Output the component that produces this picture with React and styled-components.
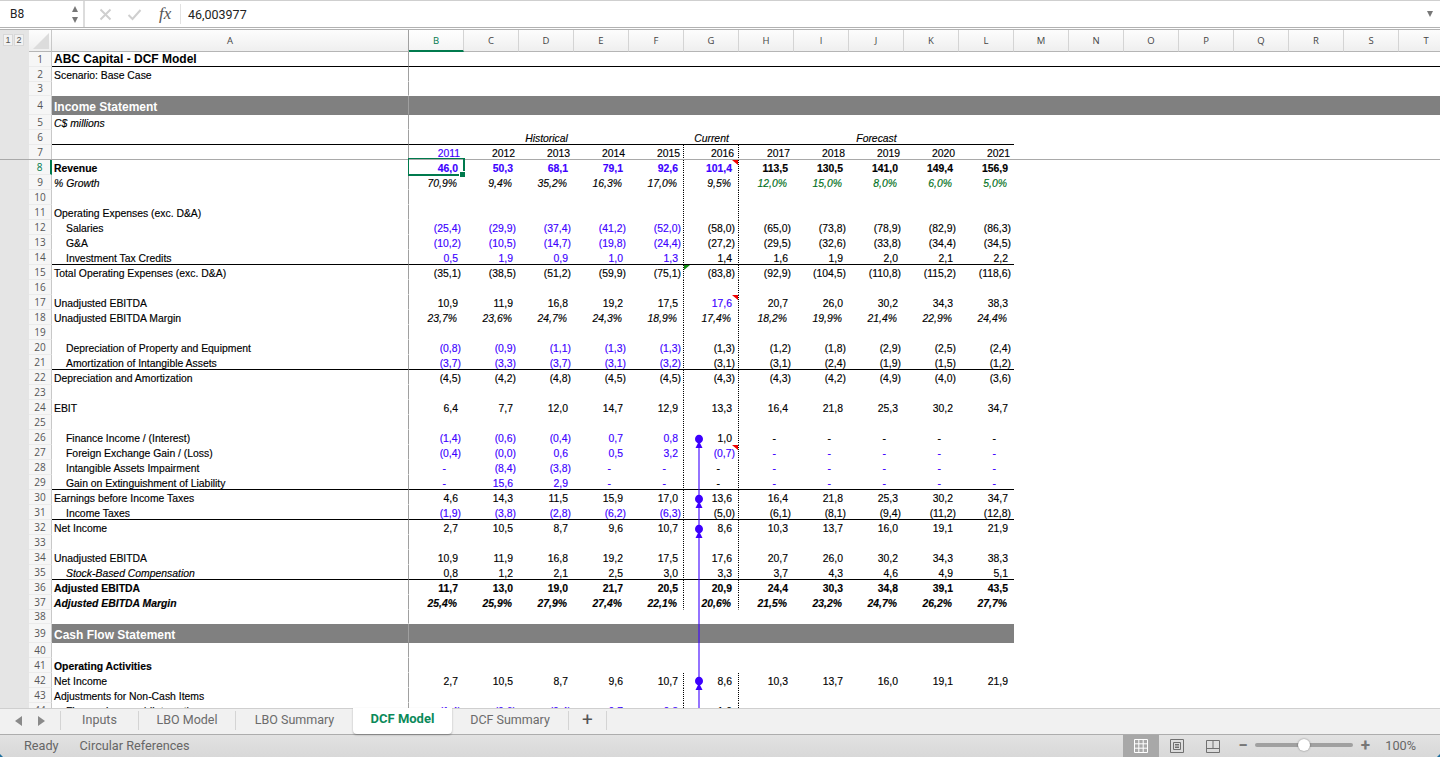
import React from 'react';
import styled, { createGlobalStyle } from 'styled-components';

const GlobalStyle = createGlobalStyle`
  html, body, #root { margin: 0; height: 100%; }
  body { overflow: hidden; background: #fff; font-family: "Liberation Sans", Arial, sans-serif; }
`;

const BLUE = '#3d00ff';
const GREEN = '#007a4d';
const COLS = 'BCDEFGHIJKLMNOPQRST'.split('');

const Page = styled.div`
  width: 1440px;
  height: 757px;
  display: flex;
  flex-direction: column;
  overflow: hidden;
  position: relative;
`;

/* formula bar */
const FormulaBar = styled.div`
  height: 30px;
  box-sizing: border-box;
  flex: none;
  display: flex;
  background: #fff;
  border-top: 1px solid #cfcfcf;
  border-bottom: 3px double #b2b2b2;
  color: #222;
  font-family: Roboto, "Liberation Sans", sans-serif;
`;
const NameBox = styled.div`
  width: 85px;
  box-sizing: border-box;
  display: flex;
  align-items: center;
  justify-content: space-between;
  padding: 0 5px 0 10px;
  font-size: 12px;
  border-right: 2px solid #dcdcdc;
`;
const Spinner = styled.div`
  display: flex;
  flex-direction: column;
  gap: 5px;
`;
const Tri = styled.span`
  width: 0;
  height: 0;
  border-left: 3.5px solid transparent;
  border-right: 3.5px solid transparent;
  ${p => (p.$up ? 'border-bottom' : 'border-top')}: 6px solid #777;
`;
const BarIcons = styled.div`
  width: 96px;
  display: flex;
  align-items: center;
  gap: 15px;
  padding-left: 14px;
  box-sizing: border-box;
  border-right: 1px solid #e2e2e2;
  margin: 3px 0;
`;
const Fx = styled.span`
  font-family: "Liberation Serif", serif;
  font-style: italic;
  font-size: 17px;
  color: #555;
  margin-left: 2px;
`;
const FormulaText = styled.div`
  flex: 1;
  display: flex;
  align-items: center;
  padding-left: 7px;
  font-size: 12.5px;
`;
const DropArrow = styled.div`
  display: flex;
  align-items: center;
  padding-right: 7px;
`;

/* sheet */
const Sheet = styled.div`
  flex: 1;
  min-height: 0;
  position: relative;
  overflow: hidden;
`;
const Row = styled.div`
  display: flex;
  height: ${p => p.$h}px;
  position: relative;
  font-size: 10.4px;
  line-height: 11px;
  color: #000;
  ${p => p.$frozen && `
    &::after {
      content: '';
      position: absolute;
      left: 0;
      right: 0;
      bottom: 0;
      height: 1px;
      background: #a9a9a9;
    }
  `}
`;
const Gutter = styled.div`
  width: 29px;
  flex: none;
  box-sizing: border-box;
  background: #e5e5e5;
  display: flex;
  gap: 1px;
  padding: 4px 0 0 3px;
`;
const LevelBtn = styled.span`
  width: 10px;
  height: 12px;
  background: #f2f2f2;
  border: 1px solid #d8d8d8;
  box-sizing: border-box;
  font-size: 9px;
  line-height: 10px;
  text-align: center;
  color: #555;
`;
const RowNum = styled.div`
  width: 23px;
  flex: none;
  box-sizing: border-box;
  background: #f6f6f6;
  border-right: ${p => (p.$active ? `2px solid ${GREEN}` : '1px solid #c8c8c8')};
  border-bottom: 1px solid #ebebeb;
  color: ${p => (p.$active ? GREEN : '#555')};
  font-family: "Open Sans", "Liberation Sans", sans-serif;
  font-size: 10px;
  display: flex;
  align-items: center;
  justify-content: center;
`;
const HeaderCorner = styled.div`
  width: 23px;
  flex: none;
  box-sizing: border-box;
  background: linear-gradient(#fdfdfd, #efefef);
  border-right: 1px solid #c8c8c8;
  border-bottom: 1px solid #b5b5b5;
  display: flex;
  align-items: flex-end;
  justify-content: flex-end;
  padding: 0 2px 2px 0;
`;
const ColHead = styled.div`
  width: ${p => p.$w}px;
  flex: none;
  box-sizing: border-box;
  background: ${p => (p.$active ? 'linear-gradient(#fff, #f4f4f4)' : 'linear-gradient(#fdfdfd, #efefef)')};
  border-right: 1px solid ${p => (p.$frozen ? '#a0a0a0' : '#d4d4d4')};
  border-bottom: ${p => (p.$active ? `2px solid ${GREEN}` : '1px solid #b5b5b5')};
  color: ${p => (p.$active ? GREEN : '#444')};
  font-family: "Open Sans", "Liberation Sans", sans-serif;
  font-size: 9.5px;
  display: flex;
  align-items: center;
  justify-content: center;
`;
const Label = styled.div`
  width: 357px;
  flex: none;
  box-sizing: border-box;
  padding-left: ${p => (p.$indent ? 14 : 2)}px;
  padding-top: ${p => (p.$band ? 4 : p.$big ? 0 : 3)}px;
  border-right: 1px solid #a0a0a0;
  border-bottom: 1px solid ${p => (p.$line ? '#000' : 'transparent')};
  background: ${p => (p.$band ? '#808080' : 'transparent')};
  color: ${p => (p.$band ? '#fff' : '#000')};
  font-size: ${p => (p.$big ? 12 : 10.4)}px;
  line-height: ${p => (p.$big ? 14 : 11)}px;
  font-weight: ${p => (p.$bold ? 700 : 400)};
  font-style: ${p => (p.$italic ? 'italic' : 'normal')};
  white-space: nowrap;
  display: flex;
  align-items: center;
  -webkit-text-stroke: ${p => (p.$big ? 0 : 0.15)}px;
`;
const Cell = styled.div`
  width: ${p => (p.$dotted ? 56 : 55)}px;
  margin-left: ${p => (p.$dotted ? -1 : 0)}px;
  flex: none;
  box-sizing: border-box;
  position: relative;
  padding-right: ${p => p.$pad}px;
  padding-top: 3px;
  border-bottom: 1px solid ${p => (p.$line ? '#000' : 'transparent')};
  background: ${p => (p.$band ? '#808080' : 'transparent')};
  color: ${p => p.$color};
  font-weight: ${p => (p.$bold ? 700 : 400)};
  font-style: ${p => (p.$italic ? 'italic' : 'normal')};
  display: flex;
  align-items: center;
  justify-content: ${p => (p.$center ? 'center' : 'flex-end')};
  -webkit-text-stroke: 0.15px;
  ${p => p.$dotted && `
    border-left: 1px dotted #000;
    border-right: 1px dotted #000;
  `}
`;
const Rest = styled.div`
  flex: 1;
  box-sizing: border-box;
  border-bottom: 1px solid ${p => (p.$line ? '#000' : 'transparent')};
  background: ${p => (p.$band ? '#808080' : 'transparent')};
`;
const Marker = styled.span`
  position: absolute;
  top: 0;
  ${p => (p.$left ? 'left: 0' : 'right: 0')};
  width: 0;
  height: 0;
  border-top: 5px solid ${p => (p.$left ? '#118a11' : '#f00000')};
  ${p => (p.$left ? 'border-right' : 'border-left')}: 6px solid transparent;
`;
const Selection = styled.div`
  position: absolute;
  left: 408px;
  top: 128px;
  width: 57px;
  height: 18px;
  box-sizing: border-box;
  border: 1px solid ${GREEN};
  border-right-width: 2px;
  border-bottom-width: 2px;
  pointer-events: none;
`;
const Handle = styled.span`
  position: absolute;
  right: -3px;
  bottom: -4px;
  width: 5px;
  height: 5px;
  background: ${GREEN};
  border: 1px solid #fff;
  box-sizing: content-box;
`;
const TraceLayer = styled.svg`
  position: absolute;
  left: 690px;
  top: 0;
  width: 20px;
  height: 678px;
  pointer-events: none;
`;

/* tabs */
const TabBar = styled.div`
  height: 27px;
  flex: none;
  box-sizing: border-box;
  display: flex;
  background: #f1f1f1;
  border-top: 1px solid #cfcfcf;
  border-bottom: 1px solid #adadad;
  font-family: Roboto, "Liberation Sans", sans-serif;
  font-size: 12.5px;
  color: #6b6b6b;
  position: relative;
`;
const TabNav = styled.div`
  width: 61px;
  box-sizing: border-box;
  border-right: 1px solid #d4d4d4;
  margin: 2px 0 4px;
  display: flex;
  align-items: center;
  gap: 16px;
  padding-left: 15px;
`;
const NavArrow = styled.span`
  width: 0;
  height: 0;
  border-top: 5.5px solid transparent;
  border-bottom: 5.5px solid transparent;
  ${p => (p.$left ? 'border-right' : 'border-left')}: 7px solid #8a8a8a;
`;
const Tab = styled.div`
  width: ${p => p.$w}px;
  flex: none;
  box-sizing: border-box;
  display: flex;
  align-items: center;
  justify-content: center;
  padding-bottom: ${p => (p.$active ? 5 : 2)}px;
  margin-bottom: ${p => (p.$active ? 0 : 4)}px;
  margin-top: ${p => (p.$active ? -1 : 2)}px;
  border-right: ${p => (p.$active || p.$flush ? 'none' : '1px solid #d4d4d4')};
  background: ${p => (p.$active ? '#fff' : 'transparent')};
  color: ${p => (p.$active ? '#0b8a5a' : '#6b6b6b')};
  font-size: ${p => (p.$active ? 13 : 12.5)}px;
  font-weight: ${p => (p.$active ? 700 : 400)};
  border-radius: ${p => (p.$active ? '0 0 4px 4px' : 0)};
  box-shadow: ${p => (p.$active ? '0 1px 2px rgba(0,0,0,.3)' : 'none')};
`;
const PlusTab = styled(Tab)`
  font-size: 19px;
  font-weight: 400;
  color: #555;
`;

/* status bar */
const StatusBar = styled.div`
  height: 22px;
  flex: none;
  box-sizing: border-box;
  padding-bottom: 2px;
  display: flex;
  align-items: center;
  background: linear-gradient(#e2e2e2, #d8d8d8);
  font-family: Roboto, "Liberation Sans", sans-serif;
  font-size: 12.7px;
  color: #666;
`;
const StatusText = styled.span`
  margin-left: ${p => p.$ml}px;
`;
const Spacer = styled.div`
  flex: 1;
`;
const ViewBtn = styled.div`
  width: 36px;
  align-self: stretch;
  margin-bottom: -2px;
  display: flex;
  align-items: center;
  justify-content: center;
  background: ${p => (p.$active ? '#a8a8a8' : 'transparent')};
`;
const Zoomer = styled.div`
  display: flex;
  align-items: center;
  margin-left: 6px;
`;
const ZoomSign = styled.span`
  width: 12px;
  text-align: center;
  font-size: 17px;
  font-weight: 700;
  line-height: 18px;
  color: #777;
`;
const Track = styled.div`
  width: 98px;
  height: 4px;
  margin: 0 6px;
  border-radius: 2px;
  background: #a0a0a0;
  position: relative;
`;
const Thumb = styled.span`
  position: absolute;
  left: 43px;
  top: -4px;
  width: 12px;
  height: 12px;
  border-radius: 50%;
  background: #fff;
  box-shadow: 0 0 2px rgba(0,0,0,.45);
`;
const ZoomValue = styled.span`
  margin-left: 14px;
  margin-right: 24px;
  color: #666;
`;
const WindowCorner = styled.span`
  position: absolute;
  bottom: 0;
  ${p => (p.$right ? 'right: 0' : 'left: 0')};
  width: 0;
  height: 0;
  border-bottom: 3px solid #1f6f9e;
  ${p => (p.$right ? 'border-left' : 'border-right')}: 3px solid transparent;
`;

const n = (...v) => v;
const B = 'b', K = 'k', G = 'g';
const rep = (t, c) => t.repeat(c);
const hist = rep(B, 5) + rep(K, 6);

const DASHES = ['-', '-', '-', '-', '-'];

const rows = [
  { n: 1, label: 'ABC Capital - DCF Model', bold: true, big: true, line: 'all' },
  { n: 2, label: 'Scenario: Base Case' },
  { n: 3, h: 14 },
  { n: 4, label: 'Income Statement', bold: true, big: true, band: 'all', h: 19 },
  { n: 5, label: 'C$ millions', labelItalic: true },
  { n: 6, line: 'table', heads: { D: 'Historical', G: 'Current', J: 'Forecast' } },
  { n: 7, frozen: true, dotted: true, year: true, tone: 'b' + rep(K, 10), vals: n('2011', '2012', '2013', '2014', '2015', '2016', '2017', '2018', '2019', '2020', '2021') },
  { n: 8, label: 'Revenue', bold: true, labelBold: true, tone: rep(B, 6) + rep(K, 5), vals: n('46,0', '50,3', '68,1', '79,1', '92,6', '101,4', '113,5', '130,5', '141,0', '149,4', '156,9'), mark: 'red' },
  { n: 9, label: '% Growth', labelItalic: true, italic: true, tone: rep(K, 6) + rep(G, 5), vals: n('70,9%', '9,4%', '35,2%', '16,3%', '17,0%', '9,5%', '12,0%', '15,0%', '8,0%', '6,0%', '5,0%') },
  { n: 10 },
  { n: 11, label: 'Operating Expenses (exc. D&A)' },
  { n: 12, label: 'Salaries', indent: true, tone: hist, vals: n('(25,4)', '(29,9)', '(37,4)', '(41,2)', '(52,0)', '(58,0)', '(65,0)', '(73,8)', '(78,9)', '(82,9)', '(86,3)') },
  { n: 13, label: 'G&A', indent: true, tone: hist, vals: n('(10,2)', '(10,5)', '(14,7)', '(19,8)', '(24,4)', '(27,2)', '(29,5)', '(32,6)', '(33,8)', '(34,4)', '(34,5)') },
  { n: 14, label: 'Investment Tax Credits', indent: true, line: 'table', tone: hist, vals: n('0,5', '1,9', '0,9', '1,0', '1,3', '1,4', '1,6', '1,9', '2,0', '2,1', '2,2') },
  { n: 15, label: 'Total Operating Expenses (exc. D&A)', vals: n('(35,1)', '(38,5)', '(51,2)', '(59,9)', '(75,1)', '(83,8)', '(92,9)', '(104,5)', '(110,8)', '(115,2)', '(118,6)'), mark: 'green' },
  { n: 16 },
  { n: 17, label: 'Unadjusted EBITDA', tone: rep(K, 5) + B + rep(K, 5), vals: n('10,9', '11,9', '16,8', '19,2', '17,5', '17,6', '20,7', '26,0', '30,2', '34,3', '38,3'), mark: 'red' },
  { n: 18, label: 'Unadjusted EBITDA Margin', italic: true, vals: n('23,7%', '23,6%', '24,7%', '24,3%', '18,9%', '17,4%', '18,2%', '19,9%', '21,4%', '22,9%', '24,4%') },
  { n: 19 },
  { n: 20, label: 'Depreciation of Property and Equipment', indent: true, tone: hist, vals: n('(0,8)', '(0,9)', '(1,1)', '(1,3)', '(1,3)', '(1,3)', '(1,2)', '(1,8)', '(2,9)', '(2,5)', '(2,4)') },
  { n: 21, label: 'Amortization of Intangible Assets', indent: true, line: 'table', tone: hist, vals: n('(3,7)', '(3,3)', '(3,7)', '(3,1)', '(3,2)', '(3,1)', '(3,1)', '(2,4)', '(1,9)', '(1,5)', '(1,2)') },
  { n: 22, label: 'Depreciation and Amortization', vals: n('(4,5)', '(4,2)', '(4,8)', '(4,5)', '(4,5)', '(4,3)', '(4,3)', '(4,2)', '(4,9)', '(4,0)', '(3,6)') },
  { n: 23 },
  { n: 24, label: 'EBIT', vals: n('6,4', '7,7', '12,0', '14,7', '12,9', '13,3', '16,4', '21,8', '25,3', '30,2', '34,7') },
  { n: 25 },
  { n: 26, label: 'Finance Income / (Interest)', indent: true, tone: hist, vals: n('(1,4)', '(0,6)', '(0,4)', '0,7', '0,8', '1,0', ...DASHES) },
  { n: 27, label: 'Foreign Exchange Gain / (Loss)', indent: true, tone: rep(B, 11), vals: n('(0,4)', '(0,0)', '0,6', '0,5', '3,2', '(0,7)', ...DASHES), mark: 'red' },
  { n: 28, label: 'Intangible Assets Impairment', indent: true, tone: rep(B, 5) + K + rep(B, 5), vals: n('-', '(8,4)', '(3,8)', '-', '-', '-', ...DASHES) },
  { n: 29, label: 'Gain on Extinguishment of Liability', indent: true, line: 'table', tone: rep(B, 5) + K + rep(B, 5), vals: n('-', '15,6', '2,9', '-', '-', '-', ...DASHES) },
  { n: 30, label: 'Earnings before Income Taxes', vals: n('4,6', '14,3', '11,5', '15,9', '17,0', '13,6', '16,4', '21,8', '25,3', '30,2', '34,7') },
  { n: 31, label: 'Income Taxes', indent: true, line: 'table', tone: hist, vals: n('(1,9)', '(3,8)', '(2,8)', '(6,2)', '(6,3)', '(5,0)', '(6,1)', '(8,1)', '(9,4)', '(11,2)', '(12,8)') },
  { n: 32, label: 'Net Income', vals: n('2,7', '10,5', '8,7', '9,6', '10,7', '8,6', '10,3', '13,7', '16,0', '19,1', '21,9') },
  { n: 33 },
  { n: 34, label: 'Unadjusted EBITDA', vals: n('10,9', '11,9', '16,8', '19,2', '17,5', '17,6', '20,7', '26,0', '30,2', '34,3', '38,3') },
  { n: 35, label: 'Stock-Based Compensation', indent: true, labelItalic: true, line: 'table', vals: n('0,8', '1,2', '2,1', '2,5', '3,0', '3,3', '3,7', '4,3', '4,6', '4,9', '5,1') },
  { n: 36, label: 'Adjusted EBITDA', bold: true, labelBold: true, vals: n('11,7', '13,0', '19,0', '21,7', '20,5', '20,9', '24,4', '30,3', '34,8', '39,1', '43,5') },
  { n: 37, label: 'Adjusted EBITDA Margin', bold: true, labelBold: true, italic: true, labelItalic: true, vals: n('25,4%', '25,9%', '27,9%', '27,4%', '22,1%', '20,6%', '21,5%', '23,2%', '24,7%', '26,2%', '27,7%') },
  { n: 38, h: 14, noDots: true },
  { n: 39, label: 'Cash Flow Statement', bold: true, big: true, band: 'table', h: 19, noDots: true },
  { n: 40, noDots: true },
  { n: 41, label: 'Operating Activities', bold: true, labelBold: true, noDots: true },
  { n: 42, label: 'Net Income', vals: n('2,7', '10,5', '8,7', '9,6', '10,7', '8,6', '10,3', '13,7', '16,0', '19,1', '21,9') },
  { n: 43, label: 'Adjustments for Non-Cash Items' },
  { n: 44, label: 'Finance Income / (Interest)', indent: true, tone: hist, vals: n('(1,4)', '(0,6)', '(0,4)', '0,7', '0,8', '1,0', ...DASHES) },
];

const toneColor = t => (t === B ? BLUE : t === G ? '#007020' : '#000');

const padFor = (v, year) => {
  if (year) return 4;
  if (v === '-') return 18;
  if (v.endsWith('%')) return 7;
  if (v.startsWith('(')) return 3;
  return 6;
};

function DataCells({ row }) {
  return COLS.slice(0, 11).map((col, i) => {
    const isG = col === 'G';
    const dotted = isG && row.n >= 7 && !row.noDots;
    const head = row.heads && row.heads[col];
    const v = row.vals && row.vals[i];
    const tone = row.tone ? row.tone[i] : K;
    return (
      <Cell
        key={col}
        $dotted={dotted}
        $line={!!row.line}
        $band={!!row.band}
        $center={!!head}
        $pad={v ? padFor(v, row.year) : 0}
        $color={toneColor(tone)}
        $bold={row.bold && !row.band}
        $italic={row.italic || !!head}
      >
        {head || v}
        {isG && row.mark && <Marker $left={row.mark === 'green'} />}
      </Cell>
    );
  });
}

function SheetRow({ row }) {
  return (
    <Row $h={row.h || 15} $frozen={row.frozen}>
      <Gutter />
      <RowNum $active={row.n === 8}>{row.n}</RowNum>
      <Label
        $indent={row.indent}
        $line={!!row.line}
        $band={!!row.band}
        $big={row.big}
        $bold={row.bold || row.labelBold}
        $italic={row.labelItalic}
      >
        {row.label}
      </Label>
      <DataCells row={row} />
      <Rest $line={row.line === 'all'} $band={row.band === 'all'} />
    </Row>
  );
}

function TraceDot({ y }) {
  return (
    <g fill={BLUE}>
      <ellipse cx="9" cy={y} rx="4" ry="4.3" />
      <path d={`M9 ${y + 2} L12.5 ${y + 9} L5.5 ${y + 9} Z`} />
    </g>
  );
}

export default function App() {
  return (
    <Page>
      <GlobalStyle />
      <FormulaBar>
        <NameBox>
          B8
          <Spinner>
            <Tri $up />
            <Tri />
          </Spinner>
        </NameBox>
        <BarIcons>
          <svg width="13" height="13" viewBox="0 0 13 13" fill="none" stroke="#cfcfcf" strokeWidth="2"><path d="M1.5 1.5l10 10M11.5 1.5l-10 10" /></svg>
          <svg width="15" height="13" viewBox="0 0 15 13" fill="none" stroke="#cfcfcf" strokeWidth="2"><path d="M1.5 7l4 4 8-9" /></svg>
          <Fx>fx</Fx>
        </BarIcons>
        <FormulaText>46,003977</FormulaText>
        <DropArrow><Tri /></DropArrow>
      </FormulaBar>
      <Sheet>
        <Row $h={22}>
          <Gutter>
            <LevelBtn>1</LevelBtn>
            <LevelBtn>2</LevelBtn>
          </Gutter>
          <HeaderCorner>
            <svg width="16" height="16" viewBox="0 0 16 16"><path d="M16 0v16H0z" fill="#dcdcdc" /></svg>
          </HeaderCorner>
          <ColHead $w={357} $frozen>A</ColHead>
          {COLS.map(c => <ColHead key={c} $w={55} $active={c === 'B'}>{c}</ColHead>)}
        </Row>
        {rows.map(r => <SheetRow key={r.n} row={r} />)}
        <Selection><Handle /></Selection>
        <TraceLayer viewBox="0 0 20 678">
          <path d="M9 408V678" stroke={BLUE} strokeWidth="1.1" />
          <TraceDot y={409} />
          <TraceDot y={469} />
          <TraceDot y={499} />
          <TraceDot y={651} />
        </TraceLayer>
      </Sheet>
      <TabBar>
        <TabNav>
          <NavArrow $left />
          <NavArrow />
        </TabNav>
        <Tab $w={78}>Inputs</Tab>
        <Tab $w={97}>LBO Model</Tab>
        <Tab $w={117} $flush>LBO Summary</Tab>
        <Tab $w={99} $active>DCF Model</Tab>
        <Tab $w={117}>DCF Summary</Tab>
        <PlusTab $w={38}>+</PlusTab>
      </TabBar>
      <StatusBar>
        <StatusText $ml={24}>Ready</StatusText>
        <StatusText $ml={21}>Circular References</StatusText>
        <Spacer />
        <ViewBtn $active>
          <svg width="14" height="14" viewBox="0 0 14 14" fill="none" stroke="#fff"><path d="M.5.5h13v13H.5zM.5 4.8h13M.5 9.2h13M4.8.5v13M9.2.5v13" /></svg>
        </ViewBtn>
        <ViewBtn>
          <svg width="14" height="14" viewBox="0 0 14 14" fill="none" stroke="#707070"><path d="M.5.5h13v13H.5zM3.5 3.5h7v7h-7zM5 5.5h4M5 7h4M5 8.5h4" /></svg>
        </ViewBtn>
        <ViewBtn>
          <svg width="14" height="13" viewBox="0 0 14 13" fill="none" stroke="#707070"><path d="M.5.5h13v12H.5zM.5 8.5h13M7 .5v8" /></svg>
        </ViewBtn>
        <Zoomer>
          <ZoomSign>−</ZoomSign>
          <Track><Thumb /></Track>
          <ZoomSign>+</ZoomSign>
        </Zoomer>
        <ZoomValue>100%</ZoomValue>
      </StatusBar>
      <WindowCorner />
      <WindowCorner $right />
    </Page>
  );
}
